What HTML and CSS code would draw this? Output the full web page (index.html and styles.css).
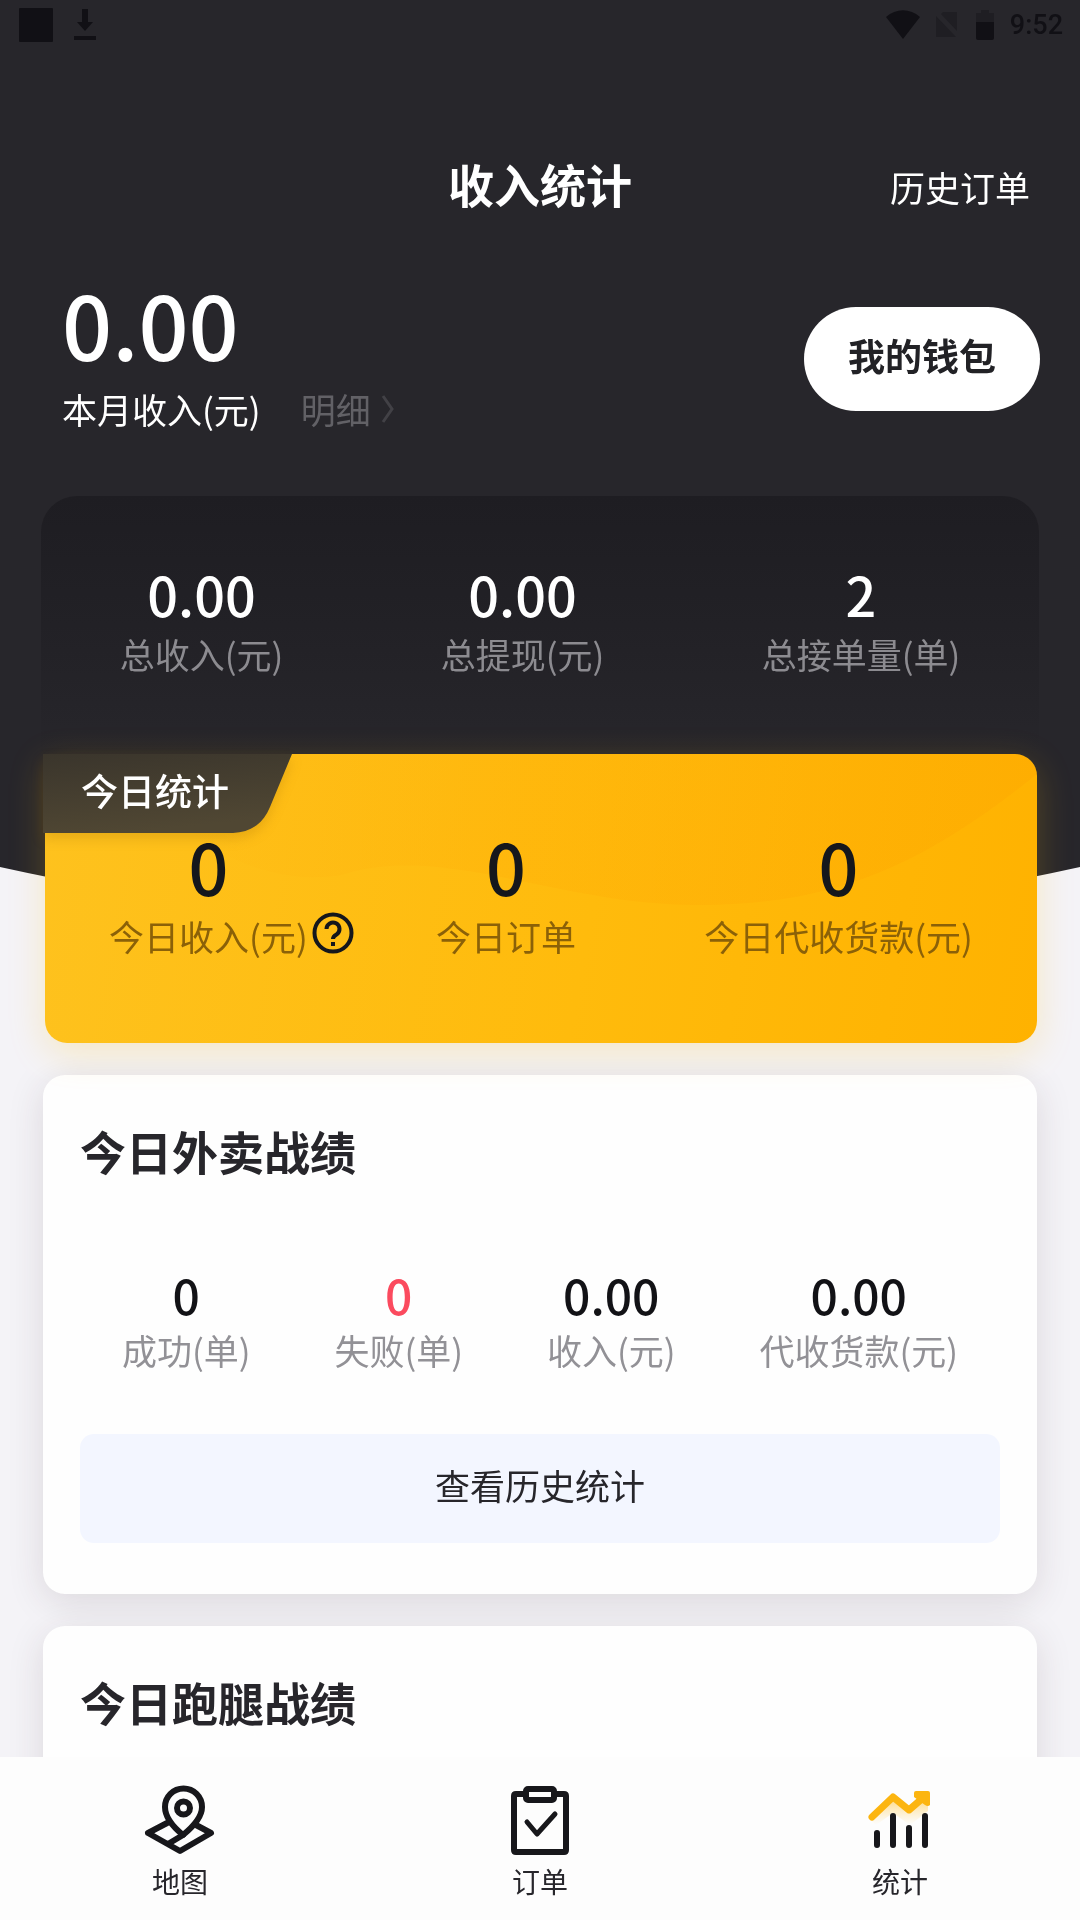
FILE: index.html
```html
<!DOCTYPE html>
<html lang="zh-CN">
<head>
<meta charset="utf-8">
<meta name="viewport" content="width=device-width, initial-scale=1">
<title>收入统计</title>
<link rel="stylesheet" href="styles.css">
</head>
<body>
<div class="app">
  <main class="scroll">
    <div class="backdrop"></div>

    <div class="status">
      <div class="status-group status-left">
        <svg width="34" height="34" viewBox="0 0 34 34"><rect width="34" height="34" rx="1"/></svg>
        <svg width="24" height="32" viewBox="0 0 24 32"><path d="M9 0h6v13h5l-8 9-8-9h5zM1 27h22v4H1z"/></svg>
      </div>
      <div class="status-group">
        <svg width="34" height="30" viewBox="0 0 34 30"><path d="M0 7C10-2 24-2 34 7L17 29z"/></svg>
        <svg class="dim" width="24" height="28" viewBox="0 0 24 28"><path d="M7 1h14v19L5 3zM0 5l20 21H0z"/></svg>
        <svg width="18" height="30" viewBox="0 0 18 30"><path class="dim" d="M5 0h8v3h5v9H0V3h5z"/><path d="M0 12h18v16q0 2-2 2H2q-2 0-2-2z"/></svg>
        <time>9:52</time>
      </div>
    </div>

    <header class="topbar">
      <h1>收入统计</h1>
      <a class="history" href="#history">历史订单</a>
    </header>

    <section class="month">
      <div class="month-sum">
        <p class="num num-xl">0.00</p>
        <p class="month-line">
          <span>本月收入(元)</span>
          <a class="detail" href="#detail">明细<svg width="14" height="30" viewBox="0 0 14 30" fill="none" stroke="currentColor" stroke-width="3"><path d="M2 2l9 13-9 13"/></svg></a>
        </p>
      </div>
      <button class="wallet" type="button">我的钱包</button>
    </section>

    <section class="totals">
      <div class="stat"><span class="num num-l">0.00</span><span>总收入(元)</span></div>
      <div class="stat"><span class="num num-l">0.00</span><span>总提现(元)</span></div>
      <div class="stat"><span class="num num-l">2</span><span>总接单量(单)</span></div>
    </section>

    <section class="today">
      <svg class="wave" viewBox="0 0 992 289" preserveAspectRatio="none">
        <defs><linearGradient id="shade"><stop offset="0" stop-color="#ff9c00" stop-opacity="0"/><stop offset=".4" stop-color="#ff9c00" stop-opacity=".13"/><stop offset="1" stop-color="#fb9a00" stop-opacity=".2"/></linearGradient></defs>
        <path fill="url(#shade)" d="M992 20C880 110 790 152 650 151C510 150 400 90 300 120C240 135 120 100 100 0H992z"/>
      </svg>
      <h2 class="tag">
        <svg viewBox="0 0 249 79" width="249" height="79"><defs><linearGradient id="tag" x2=".3" y2="1"><stop stop-color="#3a352c"/><stop offset="1" stop-color="#504733"/></linearGradient></defs><path fill="url(#tag)" d="M0 0H249L227 53C220 70 208 78 190 79H0z"/></svg>
        <span>今日统计</span>
      </h2>
      <div class="today-row">
        <div class="stat"><span class="num num-m">0</span><span>今日收入(元)</span>
          <button class="help" type="button" aria-label="说明"><svg width="42" height="42" viewBox="0 0 42 42" fill="none" stroke="#15171c" stroke-width="4"><circle cx="21" cy="21" r="18.500"/><path d="M14.500 17a6.500 6.500 0 1 1 10 5.500Q21 24.500 21 27M21 30v4"/></svg></button>
        </div>
        <div class="stat"><span class="num num-m">0</span><span>今日订单</span></div>
        <div class="stat"><span class="num num-m">0</span><span>今日代收货款(元)</span></div>
      </div>
    </section>

    <section class="card">
      <h2>今日外卖战绩</h2>
      <div class="card-row">
        <div class="stat"><span class="num num-s">0</span><span>成功(单)</span></div>
        <div class="stat"><span class="num num-s fail">0</span><span>失败(单)</span></div>
        <div class="stat"><span class="num num-s">0.00</span><span>收入(元)</span></div>
        <div class="stat"><span class="num num-s">0.00</span><span>代收货款(元)</span></div>
      </div>
      <button class="more" type="button">查看历史统计</button>
    </section>

    <section class="card">
      <h2>今日跑腿战绩</h2>
    </section>
  </main>

  <nav class="tabs">
    <a href="#map">
      <svg width="72" height="70" viewBox="0 0 72 70" fill="none" stroke="#17171b" stroke-width="6" stroke-linejoin="round" stroke-linecap="round"><path d="M39 50C28 41 21 32 21 22a18 18 0 0 1 37 0c0 10-8 19-19 28z"/><circle cx="39.500" cy="23" r="6.500"/><path d="M25 37L4 48l32 18 31-18-15-8M24 59L39 50"/></svg>
      <span>地图</span>
    </a>
    <a href="#orders">
      <svg width="60" height="70" viewBox="0 0 60 70" fill="none" stroke="#17171b" stroke-width="6" stroke-linejoin="round" stroke-linecap="round"><path d="M15 9H6q-2 0-2 2v54q0 2 2 2h48q2 0 2-2V11q0-2-2-2h-9"/><rect x="16" y="4" width="28" height="11" rx="2"/><path d="M17 37l10 12 18-20" stroke-width="5"/></svg>
      <span>订单</span>
    </a>
    <a href="#stats" aria-current="page">
      <svg width="64" height="70" viewBox="0 0 64 70" fill="none" stroke-linecap="round"><defs><linearGradient id="glow" x2="0" y2="1"><stop stop-color="#ffb70f" stop-opacity=".55"/><stop offset="1" stop-color="#ffd060" stop-opacity="0"/></linearGradient></defs><path fill="url(#glow)" d="M2 34L25 12l17 13L60 12v14L42 40 25 28 8 40z"/><path stroke="#fcb510" stroke-width="7" stroke-linejoin="round" d="M4 32L25 12l16 13 15-13"/><path fill="#fcb510" d="M46 8q0-2 2-2h12q2 0 2 2v12q-2 2-5 0L46 12z"/><path stroke="#17171b" stroke-width="6" d="M9 48v12M25 31v29M41 43v17M57 31v29"/></svg>
      <span>统计</span>
    </a>
  </nav>
</div>
</body>
</html>
```
FILE: styles.css
```css
* {
  box-sizing: border-box;
  margin: 0;
  padding: 0;
}

body {
  font-family: "Noto Sans CJK SC", sans-serif;
  font-size: 35px;
  line-height: 48px;
  color: #27262b;
  background: #f4f3f7;
}

a {
  color: inherit;
  text-decoration: none;
}

button {
  font: inherit;
  color: inherit;
  border: 0;
  background: none;
  cursor: pointer;
}

svg {
  display: block;
  flex: none;
}

.app {
  display: flex;
  flex-direction: column;
  height: 100vh;
}

.scroll {
  position: relative;
  flex: 1;
  min-height: 0;
  overflow-y: auto;
  scrollbar-width: none;
}

/* dark area behind the header, with an arched lower edge */
.backdrop {
  position: absolute;
  inset: 0 0 auto;
  z-index: -1;
  height: 926px;
  background: #27262b;
  clip-path: circle(2500px at 50% -1574px);
}

.status {
  display: flex;
  justify-content: space-between;
  height: 50px;
  padding: 0 17px 0 19px;
  fill: #111015;
}

.status-group {
  display: flex;
  align-items: center;
  gap: 16px;
}

.status-left {
  gap: 20px;
}

.status .dim {
  fill: #1f1e23;
}

.status time {
  font: 500 27px/50px Roboto, sans-serif;
  color: #111015;
}

.topbar {
  display: grid;
  grid-template-columns: 1fr auto 1fr;
  align-items: center;
  height: 150px;
  margin-top: 62px;
  padding: 0 50px;
  color: #fff;
}

.topbar h1 {
  grid-column: 2;
  padding-bottom: 8px;
  font-size: 46px;
  font-weight: 700;
}

.history {
  justify-self: end;
}

.month {
  display: flex;
  align-items: center;
  justify-content: space-between;
  height: 194px;
  padding: 0 40px 0 62px;
  color: #fff;
}

.month-sum {
  padding-bottom: 12px;
}

.num {
  font-weight: 500;
}

.num-xl {
  font-size: 88px;
  line-height: 100px;
}

.num-l {
  font-size: 54px;
  line-height: 60px;
  color: #fff;
}

.num-m {
  font-size: 70px;
  line-height: 72px;
  color: #15171c;
}

.num-s {
  font-size: 48px;
  line-height: 56px;
  color: #121216;
}

.fail {
  color: #fb4a5e;
}

.month-line {
  display: flex;
  gap: 40px;
  margin-top: 12px;
}

.detail {
  display: flex;
  align-items: center;
  gap: 10px;
  color: #626166;
}

.detail svg {
  color: #424146;
}

.wallet {
  width: 236px;
  height: 104px;
  padding-bottom: 8px;
  border-radius: 52px;
  background: #fff;
  color: #222226;
  font-size: 37px;
  font-weight: 700;
}

.stat {
  position: relative;
  display: flex;
  flex-direction: column;
  align-items: center;
  white-space: nowrap;
}

.totals {
  display: flex;
  justify-content: space-around;
  height: 258px;
  margin: 40px 41px 0;
  padding-top: 68px;
  border-radius: 36px 36px 0 0;
  background: linear-gradient(#1e1d22, #222126 50%, #27262b);
  color: #8c8b90;
}

.totals .stat {
  gap: 6px;
}

.today {
  position: relative;
  height: 289px;
  margin: 0 43px 0 45px;
  padding-top: 76px;
  border-radius: 0 22px 22px 22px;
  background: linear-gradient(100deg, #fec21e, #ffbb0c 55%, #ffb200);
  box-shadow: 0 10px 36px rgba(255, 190, 20, .22);
  color: #8b6108;
}

.wave {
  position: absolute;
  inset: 0;
  width: 100%;
  height: 100%;
  border-radius: 0 22px 22px 22px;
}

.tag {
  position: absolute;
  top: 0;
  left: -2px;
  width: 249px;
  height: 79px;
  filter: drop-shadow(0 6px 6px rgba(130, 80, 0, .18));
  font-size: 37px;
  font-weight: 500;
  line-height: 72px;
  color: #fff;
}

.tag svg {
  position: absolute;
  inset: 0;
}

.tag span {
  position: relative;
  padding-left: 38px;
}

.today-row,
.card-row {
  display: flex;
  justify-content: space-around;
}

.today-row .stat {
  gap: 10px;
}

.help {
  position: absolute;
  left: 100%;
  bottom: 6px;
  margin-left: 4px;
}

.card {
  min-height: 519px;
  margin: 32px 43px 0;
  padding: 41px 37px 50px;
  border-radius: 22px;
  background: #fefefe;
  box-shadow: 0 8px 36px rgba(60, 40, 50, .13);
}

.card h2 {
  font-size: 46px;
  font-weight: 700;
  line-height: 68px;
}

.card-row {
  margin-top: 82px;
  color: #929196;
}

.card-row .stat {
  gap: 4px;
}

.more {
  width: 100%;
  height: 109px;
  margin-top: 60px;
  padding-bottom: 8px;
  border-radius: 14px;
  background: #f3f6ff;
}

.tabs {
  position: relative;
  display: grid;
  grid-template-columns: repeat(3, 1fr);
  height: 163px;
  padding-top: 28px;
  background: #fdfdfd;
}

.tabs a {
  display: flex;
  flex-direction: column;
  align-items: center;
  gap: 8px;
  font-size: 28px;
  line-height: 36px;
}
```
